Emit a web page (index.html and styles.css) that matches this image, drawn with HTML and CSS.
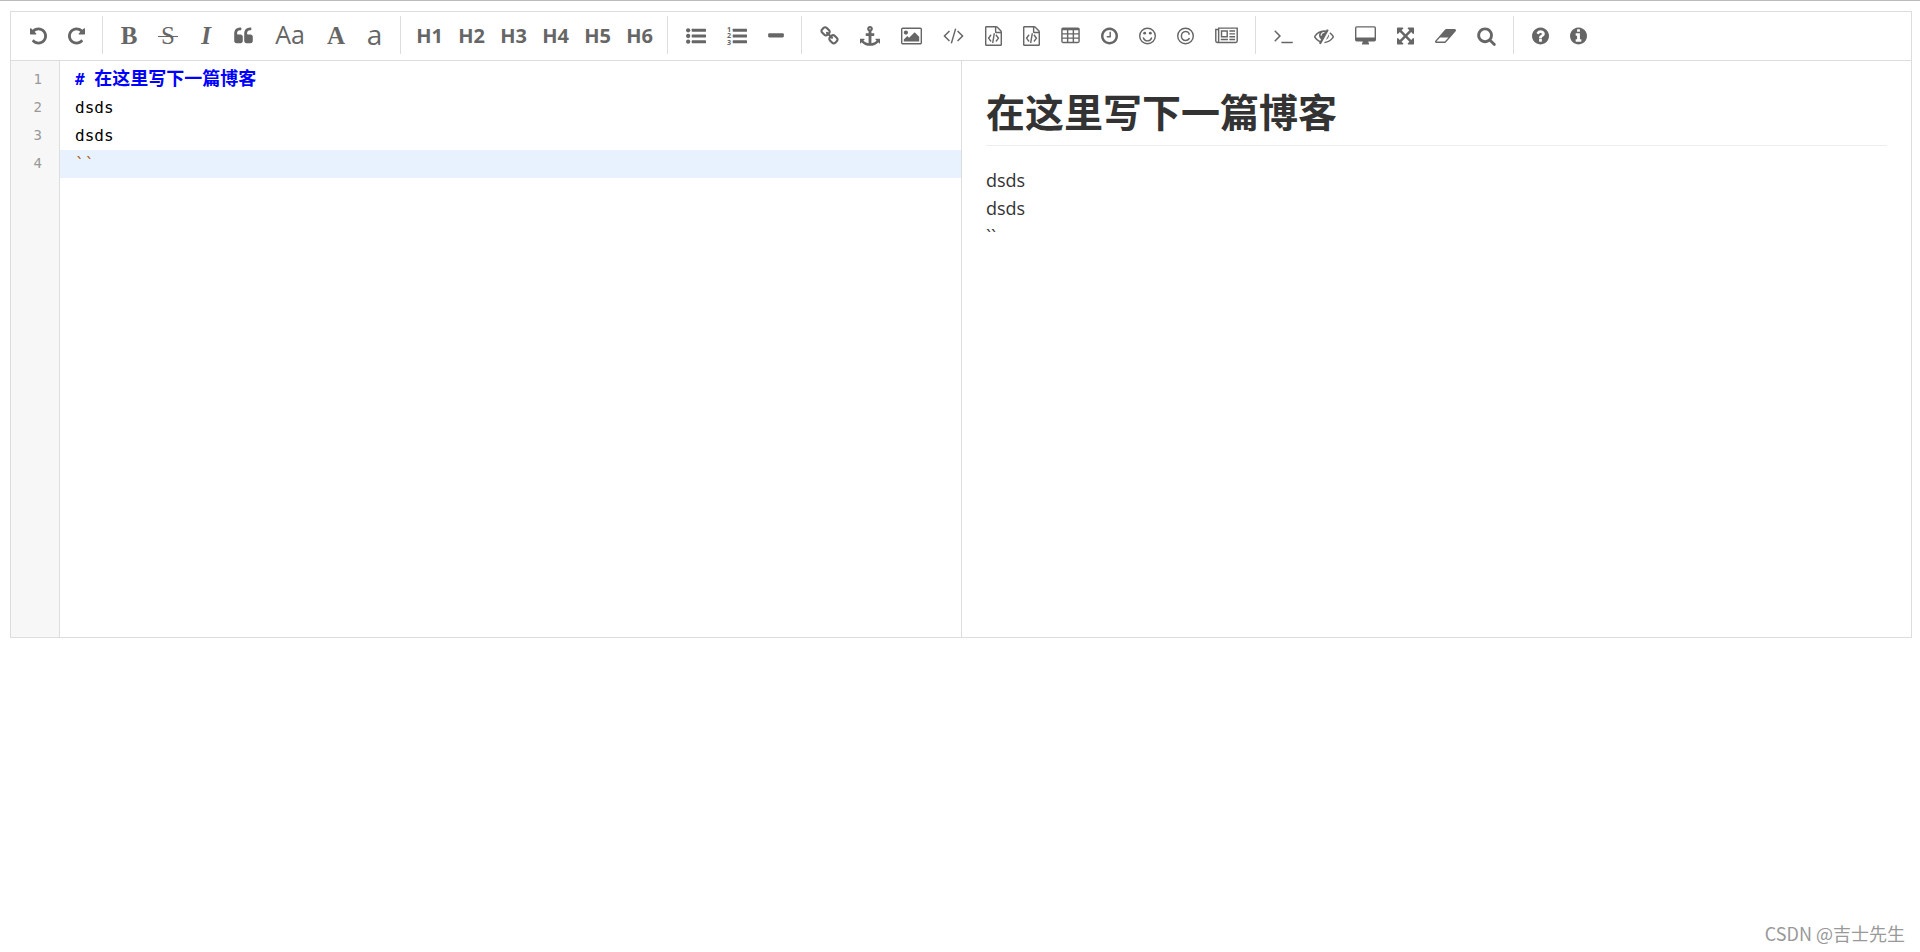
FILE: index.html
```html
<!DOCTYPE html>
<html lang="zh-CN">
<head>
<meta charset="utf-8">
<title>Markdown 编辑器</title>
<link rel="stylesheet" href="styles.css">
</head>
<body>
<main class="editor">
  <div class="toolbar" role="toolbar" aria-label="编辑工具">
    <button class="tool" aria-label="撤销"><svg class="icon w17" viewBox="128 0 1536 1792"><path d="M1664 896q0 156-61 298t-164 245-245 164-298 61q-172 0-327-72.500t-264-204.500q-7-10-6.500-22.500t8.500-20.500l137-138q10-9 25-9 16 2 23 12 73 95 179 147t225 52q104 0 198.500-40.500t163.500-109.500 109.500-163.500 40.500-198.500-40.500-198.500-109.500-163.500-163.500-109.500-198.500-40.500q-98 0-188 35.500t-160 101.500l137 138q31 30 14 69-17 40-59 40h-448q-26 0-45-19t-19-45v-448q0-42 40-59 39-17 69 14l130 129q107-101 244.500-156.500t284.500-55.500q156 0 298 61t245 164 164 245 61 298z"/></svg></button>
    <button class="tool" aria-label="重做"><svg class="icon w17" viewBox="128 0 1536 1792"><path d="M1664 256v448q0 26-19 45t-45 19h-448q-42 0-59-40-17-39 14-69l138-138q-148-137-349-137-104 0-198.500 40.500t-163.500 109.500-109.500 163.500-40.500 198.500 40.500 198.500 109.500 163.500 163.500 109.500 198.500 40.500q119 0 225-52t179-147q7-10 23-12 15 0 25 9l137 137q9 8 9.500 20.500t-7.500 22.500q-109 132-264 204.500t-327 72.500q-156 0-298-61t-245-164-164-245-61-298 61-298 164-245 245-164 298-61q147 0 284.500 55.500t244.500 156.500l130-129q29-31 70-14 39 17 39 59z"/></svg></button>
    <span class="divider"></span>
    <button class="tool serif bold" aria-label="粗体"><span class="letter w16">B</span></button>
    <button class="tool serif" aria-label="删除线"><span class="letter w20 strike">S</span></button>
    <button class="tool serif bold italic" aria-label="斜体"><span class="letter w14">I</span></button>
    <button class="tool" aria-label="引用"><svg class="icon w19" viewBox="64 0 1664 1792"><path d="M832 960v384q0 80-56 136t-136 56h-384q-80 0-136-56t-56-136v-704q0-104 40.500-198.500t109.500-163.500 163.500-109.500 198.500-40.500h64q26 0 45 19t19 45v128q0 26-19 45t-45 19h-64q-106 0-181 75t-75 181v32q0 40 28 68t68 28h224q80 0 136 56t56 136zm896 0v384q0 80-56 136t-136 56h-384q-80 0-136-56t-56-136v-704q0-104 40.500-198.500t109.500-163.500 163.500-109.500 198.500-40.500h64q26 0 45 19t19 45v128q0 26-19 45t-45 19h-64q-106 0-181 75t-75 181v32q0 40 28 68t68 28h224q80 0 136 56t56 136z"/></svg></button>
    <button class="tool sans" aria-label="首字母大写"><span class="letter w32">Aa</span></button>
    <button class="tool serif bold" aria-label="转换为大写"><span class="letter w18">A</span></button>
    <button class="tool sans lower" aria-label="转换为小写"><span class="letter w17">a</span></button>
    <span class="divider"></span>
    <button class="tool heading">H1</button>
    <button class="tool heading">H2</button>
    <button class="tool heading">H3</button>
    <button class="tool heading">H4</button>
    <button class="tool heading">H5</button>
    <button class="tool heading">H6</button>
    <span class="divider"></span>
    <button class="tool" aria-label="无序列表"><svg class="icon w20" viewBox="0 0 1792 1792"><circle cx="192" cy="384" r="192"/><circle cx="192" cy="896" r="192"/><circle cx="192" cy="1408" r="192"/><rect x="512" y="256" width="1280" height="256" rx="32"/><rect x="512" y="768" width="1280" height="256" rx="32"/><rect x="512" y="1280" width="1280" height="256" rx="32"/></svg></button>
    <button class="tool" aria-label="有序列表"><svg class="icon w20" viewBox="0 0 1792 1792"><rect x="512" y="256" width="1280" height="256" rx="32"/><rect x="512" y="768" width="1280" height="256" rx="32"/><rect x="512" y="1280" width="1280" height="256" rx="32"/><text class="digits" x="0" y="500">1</text><text class="digits" x="0" y="1110">2</text><text class="digits" x="0" y="1720">3</text></svg></button>
    <button class="tool" aria-label="横线"><svg class="icon w16" viewBox="192 0 1408 1792"><rect x="192" y="640" width="1408" height="384" rx="96"/></svg></button>
    <span class="divider"></span>
    <button class="tool" aria-label="链接"><svg class="icon w19" viewBox="64 0 1664 1792"><path d="M1520 1216q0-40-28-68l-208-208q-28-28-68-28-42 0-72 32 3 3 19 18.500t21.500 21.500 15 19 13 25.500 3.500 27.500q0 40-28 68t-68 28q-15 0-27.500-3.500t-25.500-13-19-15-21.500-21.500-18.500-19q-33 31-33 73 0 40 28 68l206 207q27 27 68 27 40 0 68-26l147-146q28-28 28-67zm-703-705q0-40-28-68l-206-207q-28-28-68-28-39 0-68 27l-147 146q-28 28-28 67 0 40 28 68l208 208q27 27 68 27 42 0 72-31-3-3-19-18.500t-21.500-21.500-15-19-13-25.500-3.500-27.500q0-40 28-68t68-28q15 0 27.500 3.500t25.500 13 19 15 21.500 21.500 18.500 19q33-31 33-73zm895 705q0 120-85 203l-147 146q-83 83-203 83-121 0-204-85l-206-207q-83-83-83-203 0-123 88-209l-88-88q-86 88-208 88-120 0-204-84l-208-208q-84-84-84-204t85-203l147-146q83-83 203-83 121 0 204 85l206 207q83 83 83 203 0 123-88 209l88 88q86-88 208-88 120 0 204 84l208 208q84 84 84 204z"/></svg></button>
    <button class="tool" aria-label="锚点"><svg class="icon w20" viewBox="0 0 1792 1792"><path d="M960 256q0-26-19-45t-45-19-45 19-19 45 19 45 45 19 45-19 19-45zm832 928v352q0 22-20 30-8 2-12 2-13 0-23-9l-93-93q-119 143-318.500 226.500t-429.500 83.500-429.500-83.500-318.500-226.500l-93 93q-9 9-23 9-4 0-12-2-20-8-20-30v-352q0-14 9-23t23-9h352q22 0 30 20 8 19-7 35l-100 100q67 91 189.500 153.500t271.500 82.500v-647h-192q-26 0-45-19t-19-45v-128q0-26 19-45t45-19h192v-163q-58-34-93-92.500t-35-128.500q0-106 75-181t181-75 181 75 75 181q0 70-35 128.500t-93 92.500v163h192q26 0 45 19t19 45v128q0 26-19 45t-45 19h-192v647q149-20 271.500-82.500t189.500-153.500l-100-100q-15-16-7-35 8-20 30-20h352q14 0 23 9t9 23z"/></svg></button>
    <button class="tool" aria-label="图片"><svg class="icon w21" viewBox="-64 0 1920 1792"><path d="M576 576q0 80-56 136t-136 56-136-56-56-136 56-136 136-56 136 56 56 136zm1024 384v448h-1408v-192l320-320 160 160 512-512zm96-704h-1600q-13 0-22.500 9.500t-9.500 22.500v1216q0 13 9.500 22.500t22.500 9.500h1600q13 0 22.500-9.500t9.500-22.500v-1216q0-13-9.500-22.500t-22.500-9.500zm160 32v1216q0 66-47 113t-113 47h-1600q-66 0-113-47t-47-113v-1216q0-66 47-113t113-47h1600q66 0 113 47t47 113z"/></svg></button>
    <button class="tool" aria-label="行内代码"><svg class="icon w21" viewBox="0 64 1920 1792"><path d="M617 1399l-50 50q-10 10-23 10t-23-10l-466-466q-10-10-10-23t10-23l466-466q10-10 23-10t23 10l50 50q10 10 10 23t-10 23l-393 393 393 393q10 10 10 23t-10 23zm591-1067l-373 1291q-4 13-15.500 19.500t-23.500 2.500l-62-17q-13-4-19.500-15.500t-2.500-24.500l373-1291q4-13 15.500-19.500t23.500-2.500l62 17q13 4 19.500 15.500t2.500 24.500zm657 651l-466 466q-10 10-23 10t-23-10l-50-50q-10-10-10-23t10-23l393-393-393-393q-10-10-10-23t10-23l50-50q10-10 23-10t23 10l466 466q10 10 10 23t-10 23z"/></svg></button>
    <button class="tool" aria-label="预格式文本"><svg class="icon w17" viewBox="128 0 1536 1792"><path d="M1596 380q28 28 48 76t20 88v1152q0 40-28 68t-68 28h-1344q-40 0-68-28t-28-68v-1600q0-40 28-68t68-28h896q40 0 88 20t76 48zm-444-244v376h376q-10-29-22-41l-313-313q-12-12-41-22zm384 1528v-1024h-416q-40 0-68-28t-28-68v-416h-768v1536h1280zm-928-896q8-11 21-12.500t24 6.500l51 38q11 8 12.500 21t-6.500 24l-182 243 182 243q8 11 6.500 24t-12.500 21l-51 38q-11 8-24 6.500t-21-12.500l-226-301q-14-19 0-38zm802 301q14 19 0 38l-226 301q-8 11-21 12.500t-24-6.500l-51-38q-11-8-12.500-21t6.500-24l182-243-182-243q-8-11-6.500-24t12.500-21l51-38q11-8 24-6.500t21 12.500zm-620 461q-13-2-20.500-13t-5.500-24l138-831q2-13 13-20.500t24-5.500l63 10q13 2 20.500 13t5.500 24l-138 831q-2 13-13 20.500t-24 5.500z"/></svg></button>
    <button class="tool" aria-label="代码块"><svg class="icon w17" viewBox="128 0 1536 1792"><path d="M1596 380q28 28 48 76t20 88v1152q0 40-28 68t-68 28h-1344q-40 0-68-28t-28-68v-1600q0-40 28-68t68-28h896q40 0 88 20t76 48zm-444-244v376h376q-10-29-22-41l-313-313q-12-12-41-22zm384 1528v-1024h-416q-40 0-68-28t-28-68v-416h-768v1536h1280zm-928-896q8-11 21-12.500t24 6.500l51 38q11 8 12.500 21t-6.500 24l-182 243 182 243q8 11 6.500 24t-12.500 21l-51 38q-11 8-24 6.500t-21-12.500l-226-301q-14-19 0-38zm802 301q14 19 0 38l-226 301q-8 11-21 12.500t-24-6.500l-51-38q-11-8-12.500-21t6.500-24l182-243-182-243q-8-11-6.500-24t12.500-21l51-38q11-8 24-6.500t21 12.500zm-620 461q-13-2-20.500-13t-5.500-24l138-831q2-13 13-20.500t24-5.500l63 10q13 2 20.500 13t5.500 24l-138 831q-2 13-13 20.500t-24 5.500z"/></svg></button>
    <button class="tool" aria-label="表格"><svg class="icon w19" viewBox="64 0 1664 1792"><path fill-rule="evenodd" d="M224 128h1344q160 0 160 160v1088q0 160-160 160h-1344q-160 0-160-160v-1088q0-160 160-160zM192 384v256h384v-256zM704 384v256h384v-256zM1216 384v256h384v-256zM192 768v256h384v-256zM704 768v256h384v-256zM1216 768v256h384v-256zM192 1152v256h384v-256zM704 1152v256h384v-256zM1216 1152v256h384v-256z"/></svg></button>
    <button class="tool" aria-label="日期时间"><svg class="icon w17" viewBox="128 0 1536 1792"><path d="M1024 544v448q0 14-9 23t-23 9h-320q-14 0-23-9t-9-23v-64q0-14 9-23t23-9h224v-352q0-14 9-23t23-9h64q14 0 23 9t9 23zm416 352q0-148-73-273t-198-198-273-73-273 73-198 198-73 273 73 273 198 198 273 73 273-73 198-198 73-273zm224 0q0 209-103 385.500t-279.500 279.500-385.500 103-385.500-103-279.500-279.500-103-385.500 103-385.500 279.500-279.500 385.500-103 385.500 103 279.500 279.500 103 385.500z"/></svg></button>
    <button class="tool" aria-label="表情"><svg class="icon w17" viewBox="128 0 1536 1792"><circle class="line" cx="896" cy="896" r="704"/><circle cx="640" cy="640" r="128"/><circle cx="1152" cy="640" r="128"/><path class="line" d="M530 1070q90 265 366 265t366-265"/></svg></button>
    <button class="tool" aria-label="HTML 实体"><svg class="icon w17" viewBox="128 0 1536 1792"><circle class="line" cx="896" cy="896" r="704"/><path class="line" d="M1215 740v-90q-100-164-300-164-180 0-285 118t-105 292 105 292 285 118q200 0 320-185"/></svg></button>
    <button class="tool" aria-label="分页符"><svg class="icon w23" viewBox="0 0 2048 1792"><path fill-rule="evenodd" d="M256 256h-256v1088q0 192 192 192h1664q192 0 192-192v-1216h-1792zM128 384h128v960q0 64-64 64t-64-64zM384 256h1536v1088q0 64-64 64h-1492q20-30 20-64z"/><path fill-rule="evenodd" d="M512 384h640v640h-640zM640 512v384h384v-384z"/><path d="M512 1152h640v128h-640zM1280 384h512v128h-512zM1280 640h512v128h-512zM1280 896h512v128h-512zM1280 1152h512v128h-512z"/></svg></button>
    <span class="divider"></span>
    <button class="tool" aria-label="跳转到行"><svg class="icon w19" viewBox="64 64 1664 1792"><path d="M649 983l-466 466q-10 10-23 10t-23-10l-50-50q-10-10-10-23t10-23l393-393-393-393q-10-10-10-23t10-23l50-50q10-10 23-10t23 10l466 466q10 10 10 23t-10 23zm1079 521v64q0 14-9 23t-23 9h-960q-14 0-23-9t-9-23v-64q0-14 9-23t23-9h960q14 0 23 9t9 23z"/></svg></button>
    <button class="tool" aria-label="关闭实时预览"><svg class="icon w20" viewBox="0 0 1792 1792"><path d="M555 1335l78-141q-87-63-136-159t-49-203q0-121 61-225-229 117-381 353 167 258 427 375zm389-759q0-20-14-34t-34-14q-125 0-214.500 89.500t-89.500 214.500q0 20 14 34t34 14 34-14 14-34q0-86 61-147t147-61q20 0 34-14t14-34zm363-191q0 7-1 9-106 189-316 567t-315 566l-49 89q-10 16-28 16-12 0-134-70-16-10-16-28 0-12 44-87-143-65-263.500-173t-208.500-245q-20-31-20-69t20-69q153-235 380-371t496-136q89 0 180 17l54-97q10-16 28-16 5 0 18 6t31 15.500 33 18.500 31.500 18.500 19.500 11.500q16 10 16 27zm37 447q0 139-79 253.500t-209 164.500l280-502q8 45 8 84zm448 128q0 35-20 69-39 64-109 145-150 172-347.500 267t-419.500 95l74-132q212-18 392.500-137t301.500-307q-115-179-282-294l63-112q95 64 182.500 153t144.500 184q20 34 20 69z"/></svg></button>
    <button class="tool" aria-label="全窗口预览"><svg class="icon w21" viewBox="0 0 1920 1792"><path fill-rule="evenodd" d="M160 0h1600q160 0 160 160v1088q0 160-160 160h-544q0 80 64 170v86h-640v-86q64-90 64-170h-544q-160 0-160-160v-1088q0-160 160-160zM128 160v864h1664v-864q0-32-32-32h-1600q-32 0-32 32z"/></svg></button>
    <button class="tool" aria-label="全屏"><svg class="icon w17" viewBox="128 0 1536 1792"><path d="M1411 541l-355 355 355 355 144-144q29-31 70-14 39 17 39 59v448q0 26-19 45t-45 19h-448q-42 0-59-40-17-39 14-69l144-144-355-355-355 355 144 144q31 30 14 69-17 40-59 40h-448q-26 0-45-19t-19-45v-448q0-42 40-59 39-17 69 14l144 144 355-355-355-355-144 144q-19 19-45 19-12 0-24-5-40-17-40-59v-448q0-26 19-45t45-19h448q42 0 59 40 17 39-14 69l-144 144 355 355 355-355-144-144q-31-30-14-69 17-40 59-40h448q26 0 45 19t19 45v448q0 42-39 59-13 5-25 5-26 0-45-19z"/></svg></button>
    <button class="tool" aria-label="清空"><svg class="icon w21" viewBox="-64 0 1920 1792"><path d="M832 1408l336-384h-768l-336 384h768zm1013-1077q15 34 9.500 71.500t-30.500 65.500l-896 1024q-38 44-96 44h-768q-38 0-69.500-20.500t-47.500-54.500q-15-34-9.500-71.500t30.500-65.500l896-1024q38-44 96-44h768q38 0 69.500 20.500t47.500 54.500z"/></svg></button>
    <button class="tool" aria-label="搜索"><svg class="icon w19" viewBox="64 0 1664 1792"><path d="M1216 832q0-185-131.500-316.500t-316.500-131.500-316.500 131.500-131.500 316.500 131.500 316.500 316.500 131.500 316.500-131.500 131.500-316.500zm512 832q0 52-38 90t-90 38q-54 0-90-38l-343-342q-179 124-399 124-143 0-273.500-55.500t-225-150-150-225-55.500-273.500 55.500-273.500 150-225 225-150 273.500-55.500 273.500 55.500 225 150 150 225 55.500 273.500q0 220-124 399l343 343q37 37 37 90z"/></svg></button>
    <span class="divider"></span>
    <button class="tool" aria-label="使用帮助"><svg class="icon w17" viewBox="128 0 1536 1792"><path d="M1024 1376v-192q0-14-9-23t-23-9h-192q-14 0-23 9t-9 23v192q0 14 9 23t23 9h192q14 0 23-9t9-23zm256-672q0-88-55.500-163t-138.500-116-170-41q-243 0-371 213-15 24 8 42l132 100q7 6 19 6 16 0 25-12 53-68 86-92 34-24 86-24 48 0 85.500 26t37.500 59q0 38-20 61t-68 45q-63 28-115.500 86.500t-52.500 125.500v36q0 14 9 23t23 9h192q14 0 23-9t9-23q0-19 21.500-49.500t54.500-49.500q32-18 49-28.500t46-35 44.500-48 28-60.500 12.500-81zm384 192q0 209-103 385.500t-279.500 279.500-385.500 103-385.500-103-279.500-279.500-103-385.500 103-385.500 279.500-279.500 385.500-103 385.500 103 279.500 279.500 103 385.500z"/></svg></button>
    <button class="tool" aria-label="关于"><svg class="icon w17" viewBox="128 0 1536 1792"><path d="M1152 1376v-160q0-14-9-23t-23-9h-96v-512q0-14-9-23t-23-9h-320q-14 0-23 9t-9 23v160q0 14 9 23t23 9h96v320h-96q-14 0-23 9t-9 23v160q0 14 9 23t23 9h448q14 0 23-9t9-23zm-128-896v-160q0-14-9-23t-23-9h-192q-14 0-23 9t-9 23v160q0 14 9 23t23 9h192q14 0 23-9t9-23zm640 416q0 209-103 385.500t-279.500 279.500-385.500 103-385.500-103-279.500-279.500-103-385.500 103-385.500 279.500-279.500 385.500-103 385.500 103 279.500 279.500 103 385.500z"/></svg></button>
  </div>
  <div class="panes">
    <section class="source" aria-label="源码">
      <div class="gutter">
        <div>1</div>
        <div>2</div>
        <div>3</div>
        <div>4</div>
      </div>
      <div class="code">
        <div class="code-line title"># <span class="cjk">在这里写下一篇博客</span></div>
        <div class="code-line">dsds</div>
        <div class="code-line">dsds</div>
        <div class="code-line active">``</div>
      </div>
    </section>
    <article class="preview">
      <h1>在这里写下一篇博客</h1>
      <p>dsds<br>dsds<br>``</p>
    </article>
  </div>
</main>
<footer class="credit">CSDN @吉士先生</footer>
</body>
</html>
```
FILE: styles.css
```css
* {
  box-sizing: border-box;
}

body {
  margin: 0;
  min-height: 100vh;
  display: flex;
  flex-direction: column;
  border-top: 1px solid #bbb;
  background: #fff;
  color: #333;
  font-family: "Open Sans", "Noto Sans CJK SC", sans-serif;
}

.editor {
  margin: 10px 8px 0 10px;
  border: 1px solid #ddd;
}

/* Toolbar */
.toolbar {
  display: flex;
  flex-wrap: wrap;
  align-items: center;
  gap: 1px;
  padding: 4px 9px 6px;
  border-bottom: 1px solid #ddd;
}

.tool {
  display: flex;
  align-items: center;
  justify-content: center;
  height: 38px;
  padding: 2px 10px 0;
  border: 0;
  background: none;
  color: #666;
  font-size: 25px;
  line-height: 36px;
  cursor: pointer;
}

.icon {
  display: block;
  height: 20px;
  overflow: visible;
  fill: #666;
}

.line {
  fill: none;
  stroke: #666;
  stroke-width: 128;
  stroke-linecap: round;
}

.digits {
  font: bold 640px "Open Sans", sans-serif;
}

.letter {
  position: relative;
  display: flex;
  justify-content: center;
}

.w14 { width: 14px; }
.w16 { width: 16px; }
.w17 { width: 17px; }
.w18 { width: 18px; }
.w19 { width: 19px; }
.w20 { width: 20px; }
.w21 { width: 21px; }
.w23 { width: 23px; }
.w32 { width: 32px; }

.serif {
  font-family: "Liberation Serif", serif;
}

.sans {
  padding: 0 10px 2px;
  font-family: "Open Sans", sans-serif;
}

.bold {
  font-weight: bold;
}

.italic {
  font-style: italic;
}

.lower {
  font-size: 28px;
}

.strike::after {
  content: "";
  position: absolute;
  top: 18px;
  left: 0;
  width: 100%;
  height: 1px;
  background: #666;
}

.heading {
  width: 41px;
  padding: 2px 0 0;
  font: bold 20px/36px "Open Sans", sans-serif;
}

.divider {
  width: 1px;
  height: 38px;
  margin: 0 7px 0 6px;
  background: #ddd;
}

/* Source and preview */
.panes {
  display: grid;
  grid-template-columns: 1fr 1fr;
  min-height: 576px;
}

.source {
  display: flex;
  font: 16px/28px "DejaVu Sans Mono", "Noto Sans CJK SC", monospace;
}

.gutter {
  width: 49px;
  padding: 4px 17px 0 0;
  border-right: 1px solid #ddd;
  background: #f7f7f7;
  color: #999;
  font-size: 14px;
  text-align: right;
}

.code {
  flex: 1;
  padding-top: 5px;
  color: #000;
}

.code-line {
  height: 28px;
  padding-left: 15px;
  white-space: pre;
}

.title {
  color: #00f;
  font-weight: bold;
}

.cjk {
  font-family: "Noto Sans CJK SC", sans-serif;
  font-size: 18px;
  line-height: 1;
}

.active {
  background: #e8f2ff;
  color: #a50;
}

.preview {
  padding: 20px 24px;
  border-left: 1px solid #ddd;
  font-size: 18px;
  line-height: 28px;
}

.preview h1 {
  margin: 6px 0 20px;
  padding-bottom: 8px;
  border-bottom: 1px solid #eee;
  font-size: 39px;
  line-height: 50px;
}

.preview p {
  margin: 0;
}

.credit {
  margin-top: auto;
  padding: 0 15px 5px;
  color: #999;
  font: 18px/28px "Noto Sans CJK SC", sans-serif;
  text-align: right;
}
```
